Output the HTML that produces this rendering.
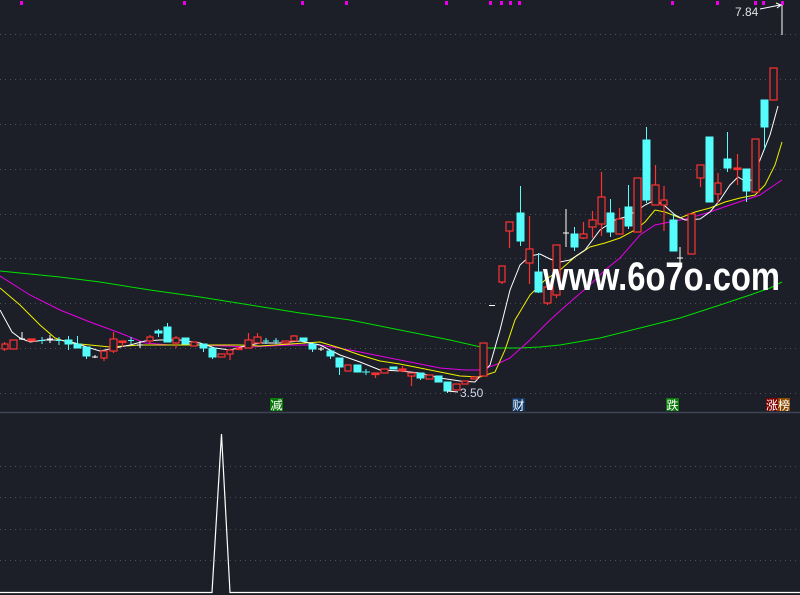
<!DOCTYPE html>
<html><head><meta charset="utf-8"><style>
html,body{margin:0;padding:0;background:#1c1f27;width:800px;height:595px;overflow:hidden}
svg{display:block}
</style></head><body>
<svg width="800" height="595" viewBox="0 0 800 595" xmlns="http://www.w3.org/2000/svg">
<rect width="800" height="595" fill="#1c1f27"/>
<g stroke="#4a4f5a" stroke-width="1" stroke-dasharray="1,4">
<line x1="0" y1="34.5" x2="800" y2="34.5"/><line x1="0" y1="79.5" x2="800" y2="79.5"/>
<line x1="0" y1="124.5" x2="800" y2="124.5"/><line x1="0" y1="169.5" x2="800" y2="169.5"/>
<line x1="0" y1="214.5" x2="800" y2="214.5"/><line x1="0" y1="258.5" x2="800" y2="258.5"/>
<line x1="0" y1="303.5" x2="800" y2="303.5"/><line x1="0" y1="348.5" x2="800" y2="348.5"/>
<line x1="0" y1="393.5" x2="800" y2="393.5"/>
<line x1="0" y1="466.5" x2="800" y2="466.5"/><line x1="0" y1="497.5" x2="800" y2="497.5"/>
<line x1="0" y1="529.5" x2="800" y2="529.5"/><line x1="0" y1="560.5" x2="800" y2="560.5"/>
</g>
<line x1="0" y1="412.5" x2="800" y2="412.5" stroke="#3e4452" stroke-width="1.5"/>
<g fill="#e800e8">
<rect x="20" y="1" width="3" height="4"/><rect x="183" y="1" width="3" height="4"/><rect x="301" y="1" width="3" height="4"/><rect x="345" y="1" width="3" height="4"/><rect x="445" y="1" width="3" height="4"/><rect x="489" y="1" width="3" height="4"/><rect x="500" y="1" width="3" height="4"/><rect x="509" y="1" width="3" height="4"/><rect x="518" y="1" width="3" height="4"/><rect x="671" y="1" width="3" height="4"/><rect x="716" y="1" width="3" height="4"/><rect x="754" y="1" width="3" height="4"/><rect x="762" y="1" width="3" height="4"/><rect x="781" y="1" width="3" height="4"/>
</g>
<!-- MAs -->
<g fill="none" stroke-width="1">
<polyline stroke="#00e000" points="0,271 30,274 60,277 100,282 150,290 200,297 250,305 300,313 350,320 400,330 450,340 485,348 520,348 540,347 560,345 600,338 640,328 680,318 720,305 750,295 770,288 782,282"/>
<polyline stroke="#e800e8" points="0,276 30,295 60,310 90,322 120,333 145,343 170,345 200,345 250,347 290,345 320,345 350,350 380,356 410,362 440,368 465,370 480,370 495,365 510,358 530,340 550,320 570,302 590,285 605,270 620,258 640,235 655,225 670,222 690,218 710,212 730,205 745,200 760,195 770,188 782,180"/>
<polyline stroke="#f0f000" points="0,288 20,305 40,325 55,338 70,343 90,345 110,347 140,345 160,345 200,345 240,345 260,346 290,344 320,342 340,348 360,355 380,361 400,364 430,370 460,376 480,377 495,372 505,350 515,320 530,295 545,280 560,270 575,257 590,247 605,243 620,238 635,230 645,222 655,210 665,212 680,218 695,212 710,208 725,202 740,198 755,195 765,185 775,165 782,142"/>
<polyline stroke="#ffffff" points="0,310 12,332 20,338 30,342 45,340 60,340 75,343 90,348 100,351 115,348 130,345 145,341 160,340 180,340 200,343 215,348 230,350 245,346 260,343 280,343 300,341 320,345 340,355 360,362 380,370 400,371 420,373 440,378 460,381 475,382 490,365 500,330 510,290 520,265 530,256 540,254 550,259 560,262 570,260 585,250 600,230 615,220 625,217 635,212 645,205 655,200 665,206 675,215 685,220 700,219 710,212 720,200 730,185 738,177 745,181 752,180 760,160 770,135 778,106"/>
</g>
<!-- red hollow candles: x, bodyTop, bodyBottom, wickTop, wickBottom -->
<g stroke="#ff3232" stroke-width="1.2" fill="#1c1f27">
<path d="M4.5 342V351"/><rect x="2" y="344" width="6" height="5"/>
<rect x="10" y="340" width="7" height="9"/>
<rect x="28" y="339" width="7" height="2" fill="#ff3232"/>
<path d="M104 351V361"/><rect x="101" y="351" width="6" height="7"/>
<path d="M113.5 332V353"/><rect x="110" y="339" width="7" height="12"/>
<path d="M122.5 341V347"/><rect x="119" y="341" width="7" height="1.5" fill="#ff3232"/>
<path d="M150 335V344"/><rect x="147" y="337" width="6" height="4"/>
<path d="M176 336V348"/><rect x="173" y="338" width="6" height="5"/>
<rect x="191" y="342" width="6" height="4"/>
<rect x="218" y="354" width="7" height="3"/>
<path d="M230 350V360"/><rect x="227" y="350" width="6" height="4"/>
<rect x="236" y="348" width="6" height="1.5" fill="#ff3232"/>
<path d="M248.5 333V348"/><rect x="245" y="340" width="7" height="8"/>
<path d="M257.5 333V343"/><rect x="254" y="337" width="7" height="6"/>
<rect x="282" y="341" width="7" height="2"/>
<path d="M294 335V341"/><rect x="291" y="336" width="6" height="5"/>
<rect x="345" y="365" width="6" height="6"/>
<path d="M375.5 373V378"/><rect x="372" y="373" width="7" height="1.5" fill="#ff3232"/>
<rect x="381" y="369" width="7" height="4"/>
<path d="M402.5 366V371"/><rect x="399" y="369" width="7" height="2" fill="#ff3232"/>
<path d="M411.5 373V386"/><rect x="408" y="373" width="7" height="3"/>
<rect x="426" y="375" width="7" height="4"/>
<rect x="453" y="384" width="7" height="6"/>
<rect x="462" y="381" width="6" height="3"/>
<rect x="471" y="377" width="6" height="2"/>
<rect x="480" y="343" width="7" height="33"/>
<path d="M502 266V284"/><rect x="499" y="266" width="6" height="16"/>
<path d="M509.5 222V248"/><rect x="506" y="222" width="7" height="9"/>
<path d="M529.5 216V284"/><rect x="526" y="249" width="7" height="14"/>
<path d="M547.5 287V305"/><rect x="544" y="287" width="7" height="16"/>
<path d="M556.5 245V298"/><rect x="553" y="245" width="7" height="50"/>
<path d="M583.5 222V239"/><rect x="580" y="234" width="7" height="4"/>
<path d="M592.5 211V238"/><rect x="589" y="220" width="7" height="7"/>
<path d="M601.5 172V236"/><rect x="598" y="197" width="7" height="27"/>
<path d="M619.5 208V234"/><rect x="616" y="219" width="7" height="15"/>
<rect x="634" y="178" width="7" height="54"/>
<path d="M655.5 165V205"/><rect x="652" y="185" width="7" height="20"/>
<path d="M664 186V231"/><rect x="661" y="200" width="6" height="5"/>
<rect x="688" y="214" width="7" height="40"/>
<path d="M700.5 165V187"/><rect x="697" y="165" width="7" height="13"/>
<path d="M718 173V203"/><rect x="715" y="183" width="6" height="11"/>
<path d="M737.5 154V185"/><rect x="734" y="168" width="7" height="1.5" fill="#ff3232"/>
<rect x="752" y="139" width="7" height="53"/>
<rect x="770" y="68" width="7" height="32"/>
</g>
<!-- cyan candles -->
<g fill="#54fcfc" stroke="#54fcfc" stroke-width="1">
<path d="M42 337V344M39 340.5H45"/><path d="M59 337V345M56 340.5H62"/>
<path d="M68.5 336V350"/><rect x="65" y="340" width="7" height="4"/>
<path d="M77.5 336V348"/><rect x="74" y="344" width="7" height="4"/>
<path d="M86.5 347V359"/><rect x="83" y="347" width="7" height="9"/>
<path d="M131 337V344M128 340.5H134"/>
<path d="M158.5 329V337"/><rect x="155" y="331" width="7" height="2"/>
<path d="M167.5 323V342"/><rect x="164" y="327" width="7" height="15"/>
<rect x="182" y="338" width="7" height="6"/>
<path d="M203.5 344V352"/><rect x="200" y="344" width="7" height="4"/>
<path d="M212.5 348V359"/><rect x="209" y="348" width="7" height="9"/>
<path d="M266 338V344M263 341H269"/><path d="M276 338V344M273 341H279"/>
<rect x="300" y="338" width="7" height="3"/>
<path d="M312.5 344V352"/><rect x="309" y="344" width="7" height="5"/>
<path d="M330.5 351V359"/><rect x="327" y="351" width="7" height="5"/>
<path d="M339.5 358V375"/><rect x="336" y="358" width="7" height="9"/>
<rect x="354" y="365" width="7" height="7"/>
<path d="M366 369V375M362 372H370"/>
<rect x="390" y="367" width="7" height="2"/>
<path d="M420.5 373V380"/><rect x="417" y="373" width="7" height="5"/>
<rect x="435" y="376" width="7" height="6"/>
<path d="M447.5 382V393"/><rect x="444" y="382" width="7" height="9"/>
<path d="M520.5 186V246"/><rect x="517" y="213" width="7" height="28"/>
<path d="M538.5 253V293"/><rect x="535" y="272" width="7" height="20"/>
<path d="M574.5 227V251"/><rect x="571" y="234" width="7" height="13"/>
<path d="M610.5 199V237"/><rect x="607" y="213" width="7" height="19"/>
<path d="M628.5 185V229"/><rect x="625" y="207" width="7" height="19"/>
<path d="M646.5 127V203"/><rect x="643" y="140" width="7" height="60"/>
<path d="M673.5 214V251"/><rect x="670" y="220" width="7" height="31"/>
<rect x="706" y="137" width="7" height="65"/>
<path d="M727.5 132V172"/><rect x="724" y="159" width="7" height="9"/>
<path d="M746.5 169V202"/><rect x="743" y="169" width="7" height="22"/>
<path d="M764.5 100V150"/><rect x="761" y="100" width="7" height="27"/>
</g>
<!-- white crosses -->
<g stroke="#ffffff" stroke-width="1" fill="none">
<path d="M22 332V340M19 339H25"/><path d="M50 335V343M47 339H53"/>
<path d="M95 355V358M92 357H98"/><path d="M140 341V348M137 345H143"/>
<path d="M321 347V351M318 349H324"/><path d="M566 209V247M563 233H569"/>
<path d="M680 247V264M677 258H683"/><path d="M489 305.5H495"/>
<path d="M782 5V35M760 9L780 5M776 3L781 5L777 8"/>
<path d="M447 391L458 392"/>
</g>
<text x="735" y="16" fill="#e0e0e0" font-family="Liberation Sans, sans-serif" font-size="12">7.84</text>
<text x="460" y="397" fill="#d0d8e8" font-family="Liberation Sans, sans-serif" font-size="12">3.50</text>
<text x="543" y="290" fill="#ffffff" font-family="Liberation Sans, sans-serif" font-size="40" font-weight="bold" textLength="237" lengthAdjust="spacingAndGlyphs">www.6o7o.com</text>
<!-- labels -->
<rect x="270" y="398" width="13" height="13" fill="#0a7a0a"/>
<text x="270.5" y="409.5" fill="#fff" font-family="Liberation Sans, 'Noto Sans CJK SC', sans-serif" font-size="12">减</text>
<rect x="512" y="398" width="13" height="13" fill="#0f3a6b"/>
<text x="512.5" y="409.5" fill="#fff" font-family="Liberation Sans, 'Noto Sans CJK SC', sans-serif" font-size="12">财</text>
<rect x="666" y="398" width="13" height="13" fill="#0a7a0a"/>
<text x="666.5" y="409.5" fill="#fff" font-family="Liberation Sans, 'Noto Sans CJK SC', sans-serif" font-size="12">跌</text>
<rect x="766" y="398" width="12" height="13" fill="#7a0000"/>
<rect x="778" y="398" width="12" height="13" fill="#8a4a00"/>
<text x="766" y="409.5" fill="#fff" font-family="Liberation Sans, 'Noto Sans CJK SC', sans-serif" font-size="12">涨榜</text>
<!-- lower indicator -->
<polyline fill="none" stroke="#ffffff" stroke-width="1.2" points="0,592.5 212,592.5 221.5,434 230,592.5 800,592.5"/>
</svg>
</body></html>
